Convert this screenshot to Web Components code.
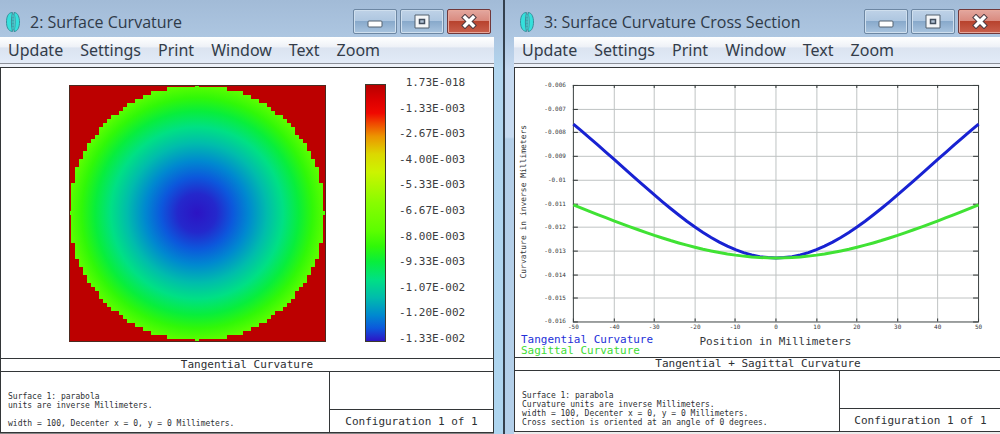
<!DOCTYPE html>
<html lang="en">
<head>
<meta charset="utf-8">
<title>Surface Curvature</title>
<style>
  html, body { margin: 0; }
  body {
    min-height: 100vh;
    display: flex;
    overflow: hidden;
    font-family: "Open Sans", "Noto Sans", sans-serif;
    background: #b4cfe8;
    --mono: "DejaVu Sans Mono", "Liberation Mono", monospace;
    --line: #333638;
  }
  window-desktop { flex: 1; }
</style>
</head>
<body>
<window-desktop>
  <plot-window caption="2: Surface Curvature">
    <curvature-map slot="plot"></curvature-map>
    <plot-report slot="report" heading="Tangential Curvature" configuration="Configuration 1 of 1">
      <div>Surface 1: parabola</div>
      <div>units are inverse Millimeters.</div>
      <div>&nbsp;</div>
      <div>width = 100, Decenter x = 0, y = 0 Millimeters.</div>
    </plot-report>
  </plot-window>
  <plot-window caption="3: Surface Curvature Cross Section" side="right">
    <cross-section-chart slot="plot"></cross-section-chart>
    <plot-report slot="report" heading="Tangential + Sagittal Curvature" configuration="Configuration 1 of 1">
      <div>Surface 1: parabola</div>
      <div>Curvature units are inverse Millimeters.</div>
      <div>width = 100, Decenter x = 0, y = 0 Millimeters.</div>
      <div>Cross section is oriented at an angle of 0 degrees.</div>
    </plot-report>
  </plot-window>
</window-desktop>

<script>
const EDGE = 0.5760;               // curvature at the rim, relative to the vertex
const COLOR_MAP = [
  [0, '#b80000'], [0.06, '#dc0000'], [0.11, '#f00800'], [0.15, '#f04800'], [0.2, '#ec9400'],
  [0.27, '#dcd800'], [0.34, '#ccf400'], [0.46, '#88fc00'], [0.57, '#5cfe00'], [0.63, '#30f808'],
  [0.69, '#08ee3c'], [0.76, '#00e084'], [0.83, '#00bcac'], [0.9, '#0088d0'],
  [0.95, '#0c58dc'], [0.985, '#2428cc'], [1, '#2c14c4']
];

function shadow(host, html) {
  const t = document.createElement('template');
  t.innerHTML = html;
  host.attachShadow({ mode: 'open' }).append(t.content.cloneNode(true));
}

customElements.define('window-desktop', class extends HTMLElement {
  constructor() {
    super();
    shadow(this, `
      <style>
        :host { display: grid; grid-template-columns: 503fr 499fr; margin-right: -2px; }
      </style>
      <slot></slot>`);
  }
});

customElements.define('caption-button', class extends HTMLElement {
  connectedCallback() {
    const kind = this.getAttribute('kind');
    const glyph = {
      Minimize: '<rect x="1" y="7" width="14" height="6" rx="1" fill="#fff" stroke="#53606e"/>',
      Maximize: '<path d="M1 1h14v13h-14z" fill="#f4f6f8" stroke="#53606e"/><rect x="5.5" y="5.5" width="5" height="4" fill="#aebfd2" stroke="#414e5e" stroke-width="1.5"/>',
      Close: '<path d="M4 3.500L12 11.500M12 3.500L4 11.500" stroke="#4c3b42" stroke-width="5.500" stroke-linecap="square"/><path d="M4 3.500L12 11.500M12 3.500L4 11.500" stroke="#fff" stroke-width="3.500" stroke-linecap="square"/>'
    }[kind];
    const face = kind === 'Close'
      ? 'linear-gradient(#e3a79f, #d98a7e 48%, #b8432e 50%, #c9604c)'
      : 'linear-gradient(#bfd2e7, #adc6e0 48%, #88a9cb 50%, #a9c4df)';
    shadow(this, `
      <style>
        :host { display: block; }
        button {
          display: flex; align-items: center; justify-content: center;
          box-sizing: border-box; width: 44px; height: 25px; padding: 0;
          border: 1px solid ${kind === 'Close' ? '#71383a' : '#6d87a3'}; border-radius: 2px;
          box-shadow: inset 0 0 0 1px ${kind === 'Close' ? '#e8a79a' : '#cfdfee'};
          background: ${face};
        }
        svg { display: block; width: 16px; height: 15px; }
      </style>
      <button type="button" aria-label="${kind}"><svg viewBox="0 0 16 15">${glyph}</svg></button>`);
  }
});

customElements.define('menu-bar', class extends HTMLElement {
  constructor() {
    super();
    const items = ['Update', 'Settings', 'Print', 'Window', 'Text', 'Zoom'];
    shadow(this, `
      <style>
        :host {
          display: flex; align-items: center; gap: 17px; height: 26px; padding: 0 8px;
          background: linear-gradient(#fff, #eef1f7 38%, #dbe3f0 42%, #dfe8f5 80%, #e4ecf8);
          border-bottom: 1px solid #8b8f98;
        }
        button {
          padding: 0; border: 0; background: none; color: #333c49;
          font-family: "Noto Sans", "Open Sans", sans-serif; font-size: 16px; line-height: 24px;
        }
      </style>
      ${items.map(i => `<button type="button">${i}</button>`).join('')}`);
  }
});

customElements.define('plot-window', class extends HTMLElement {
  connectedCallback() {
    shadow(this, `
      <style>
        :host {
          display: flex; flex-direction: column; min-width: 0; box-sizing: border-box;
          padding-right: 9px;
          background: linear-gradient(#a2bbd7, #adc6e1 37px, #b2d6ef 70px, #aed5ef);
        }
        :host([side="right"]) {
          padding: 0 0 0 9px; border-left: 2px solid #34404d;
          background: linear-gradient(#a2bbd7, #adc6e1 37px, #c6daf0 70px, #c6daf0 137px, #b3cee7 139px, #b3cfe9);
        }
        header { display: flex; align-items: center; height: 37px; box-sizing: border-box; padding: 6px 3px 0 6px; gap: 10px; }
        :host([side="right"]) header { padding-right: 0; }
        h1 { flex: 1; margin: 0; font-size: 16px; line-height: 24px; font-weight: 400; color: #2f3a48; white-space: nowrap; }
        .icon { display: block; width: 14px; height: 22px; }
        .buttons { display: flex; gap: 3px; }
        main {
          flex: 1; display: flex; flex-direction: column; margin-top: 3px;
          border: solid var(--line); border-width: 1px 1px 0 1px; background: #fff;
          box-shadow: 0 -3px #eef2f9;
        }
        .plot { flex: 1; display: flex; }
        footer { height: 1px; background: #858585; }
        :host([side="right"]) footer { height: 2px; background: #ececec; }
      </style>
      <header>
        <svg class="icon" viewBox="0 0 14 22">
          <path d="M6.500 1.500C1.500 1.500.5 7 .5 11s1 9 6 9.500c-1.500-5-1.500-14 0-19z" fill="#35e0dc" stroke="#3a8f9c"/>
          <path d="M8 1.500c4 0 5.500 5 5.500 9.500S12 20.500 8 20.500C9.500 15 9.500 7 8 1.500z" fill="#35e0dc" stroke="#3a8f9c"/>
          <path d="M6 3h2.500v16H6z" fill="#40d0d0"/><path d="M7 2.500v17" stroke="#427c8c" stroke-dasharray="2 1"/>
        </svg>
        <h1>${this.getAttribute('caption')}</h1>
        <div class="buttons">
          <caption-button kind="Minimize"></caption-button>
          <caption-button kind="Maximize"></caption-button>
          <caption-button kind="Close"></caption-button>
        </div>
      </header>
      <menu-bar></menu-bar>
      <main>
        <div class="plot"><slot name="plot"></slot></div>
        <slot name="report"></slot>
      </main>
      <footer></footer>`);
  }
});

customElements.define('plot-report', class extends HTMLElement {
  connectedCallback() {
    shadow(this, `
      <style>
        :host { display: block; font-family: var(--mono); color: #2d2f33; border-bottom: 1px solid var(--line); }
        h2 {
          margin: 0; font-size: 11px; line-height: 12px; font-weight: 400; text-align: center;
          border: solid var(--line); border-width: 1px 0;
        }
        .info { display: grid; grid-template-columns: 2fr 1fr; height: 60px; }
        .notes {
          display: flex; flex-direction: column; justify-content: flex-end;
          padding: 0 7px 4px; font-size: 8px; line-height: 9px; white-space: nowrap;
        }
        .config {
          display: grid; grid-template-rows: 1fr 23px; border-left: 1px solid var(--line);
          font-size: 11px; line-height: 24px; text-align: center;
        }
        .config p { margin: 0; border-top: 1px solid var(--line); }
      </style>
      <h2>${this.getAttribute('heading')}</h2>
      <div class="info">
        <div class="notes"><slot></slot></div>
        <div class="config"><span></span><p>${this.getAttribute('configuration')}</p></div>
      </div>`);
  }
});

customElements.define('curvature-map', class extends HTMLElement {
  constructor() {
    super();
    const labels = ['1.73E-018', '-1.33E-003', '-2.67E-003', '-4.00E-003', '-5.33E-003', '-6.67E-003',
      '-8.00E-003', '-9.33E-003', '-1.07E-002', '-1.20E-002', '-1.33E-002'];
    // Cells of 4 units centred on lattice points; the outermost are halved by the frame.
    let disc = '';
    for (let j = -32; j <= 32; j++) {
      const n = Math.floor(Math.sqrt(1024 - j * j)) * 4 + 2;
      disc += `M${128 - n} ${126 + j * 4}h${2 * n}v4h${-2 * n}z`;
    }
    const span = Math.pow(EDGE, -2 / 3) - 1;
    const stops = COLOR_MAP.filter(s => s[0] > 0.56).reverse().map(([t, c]) =>
      `<stop offset="${Math.min(1, Math.sqrt((Math.pow(t, -2 / 3) - 1) / span)).toFixed(3)}" stop-color="${c}"/>`).join('');
    const bar = COLOR_MAP.map(([t, c]) => `${c} ${t * 100}%`).join(',');
    shadow(this, `
      <style>
        :host { display: flex; align-items: flex-start; padding: 9px 16px 0 68px; }
        svg { display: block; width: 257px; height: 257px; margin-top: 8px; }
        .bar {
          box-sizing: border-box; width: 21px; height: 258px; margin: 7px 13px 0 39px;
          border: 1px solid #3d3a2c; background: linear-gradient(${bar});
        }
        ol {
          display: flex; flex-direction: column; justify-content: space-between;
          height: 268px; margin: 0; padding: 0; list-style: none; text-align: right;
          font-family: var(--mono); font-size: 11px; line-height: 12px; color: #3c3d40;
        }
      </style>
      <svg viewBox="0 0 257 257" role="img" aria-label="Tangential curvature map">
        <defs>
          <radialGradient id="g" gradientUnits="userSpaceOnUse" cx="128" cy="128" r="128">${stops}</radialGradient>
          <clipPath id="c"><path d="M0 0h256v256h-256z"/></clipPath>
        </defs>
        <path d="M0 0h257v257h-257z" fill="#bc0000"/>
        <path d="${disc}" fill="url(#g)" clip-path="url(#c)" shape-rendering="crispEdges"/>
        <path d="M.5.5h256v256h-256z" fill="none" stroke="#4a2a20"/>
      </svg>
      <div class="bar"></div>
      <ol>${labels.map(l => `<li>${l}</li>`).join('')}</ol>`);
  }
});

customElements.define('cross-section-chart', class extends HTMLElement {
  constructor() {
    super();
    const L = 58, T = 17, W = 406, H = 237;
    const xs = [...Array(11)].map((_, i) => Math.round(L + W * i / 10) + 0.5);
    const ys = [...Array(11)].map((_, i) => Math.round(T + H * i / 10) + 0.5);
    const yLabels = ['-0.006', '-0.007', '-0.008', '-0.009', '-0.01', '-0.011', '-0.012', '-0.013', '-0.014', '-0.015', '-0.016'];
    const curve = power => {
      const pts = [];
      for (let r = -50; r <= 50; r += 2) {
        const v = Math.pow(1 + Math.pow(r / 75, 2), -power) / 75;
        pts.push((L + 0.5 + W * (r + 50) / 100).toFixed(1) + ',' + (T - 0.5 + H * (v - 0.006) * 100).toFixed(1));
      }
      return pts.join(' ');
    };
    const grid = xs.slice(1, -1).map(x => `M${x} ${T}v${H}`).join('') + ys.slice(1, -1).map(y => `M${L} ${y}h${W}`).join('');
    const ticks = xs.map(x => `M${x} ${T}v3M${x} ${T + H}v-3`).join('') + ys.map(y => `M${L} ${y}h5M${L + W} ${y}h-5`).join('');
    shadow(this, `
      <style>
        :host { display: block; flex: 1; min-width: 0; }
        svg { display: block; width: 100%; font-family: var(--mono); }
        text { fill: #35373b; }
        .title { font-size: 11px; }
        .axis { font-size: 8px; }
        .tick { font-size: 6px; }
        .tangential { fill: #2430d8; }
        .sagittal { fill: #3edc34; }
      </style>
      <svg viewBox="0 0 487 289" role="img" aria-label="Tangential and sagittal curvature">
        <path d="${grid}" stroke="#bfc3c3" fill="none"/>
        <path d="${ticks}" stroke="#2e3333" fill="none"/>
        <rect x="${L + 0.5}" y="${T + 0.5}" width="${W}" height="${H}" fill="none" stroke="#3c4242"/>
        <polyline points="${curve(1.5)}" fill="none" stroke="#1822d2" stroke-width="3"/>
        <polyline points="${curve(0.5)}" fill="none" stroke="#40e234" stroke-width="3"/>
        ${ys.map((y, i) => `<text class="tick" x="51" y="${y + 1.5}" text-anchor="end">${yLabels[i]}</text>`).join('')}
        ${xs.map((x, i) => `<text class="tick" x="${x}" y="262" text-anchor="middle">${i * 10 - 50}</text>`).join('')}
        <text class="axis" transform="translate(11 134) rotate(-90)" text-anchor="middle">Curvature in inverse Millimeters</text>
        <text class="title" x="261" y="278" text-anchor="middle">Position in Millimeters</text>
        <text class="title tangential" x="6" y="276">Tangential Curvature</text>
        <text class="title sagittal" x="6" y="287">Sagittal Curvature</text>
      </svg>`);
  }
});
</script>
</body>
</html>
